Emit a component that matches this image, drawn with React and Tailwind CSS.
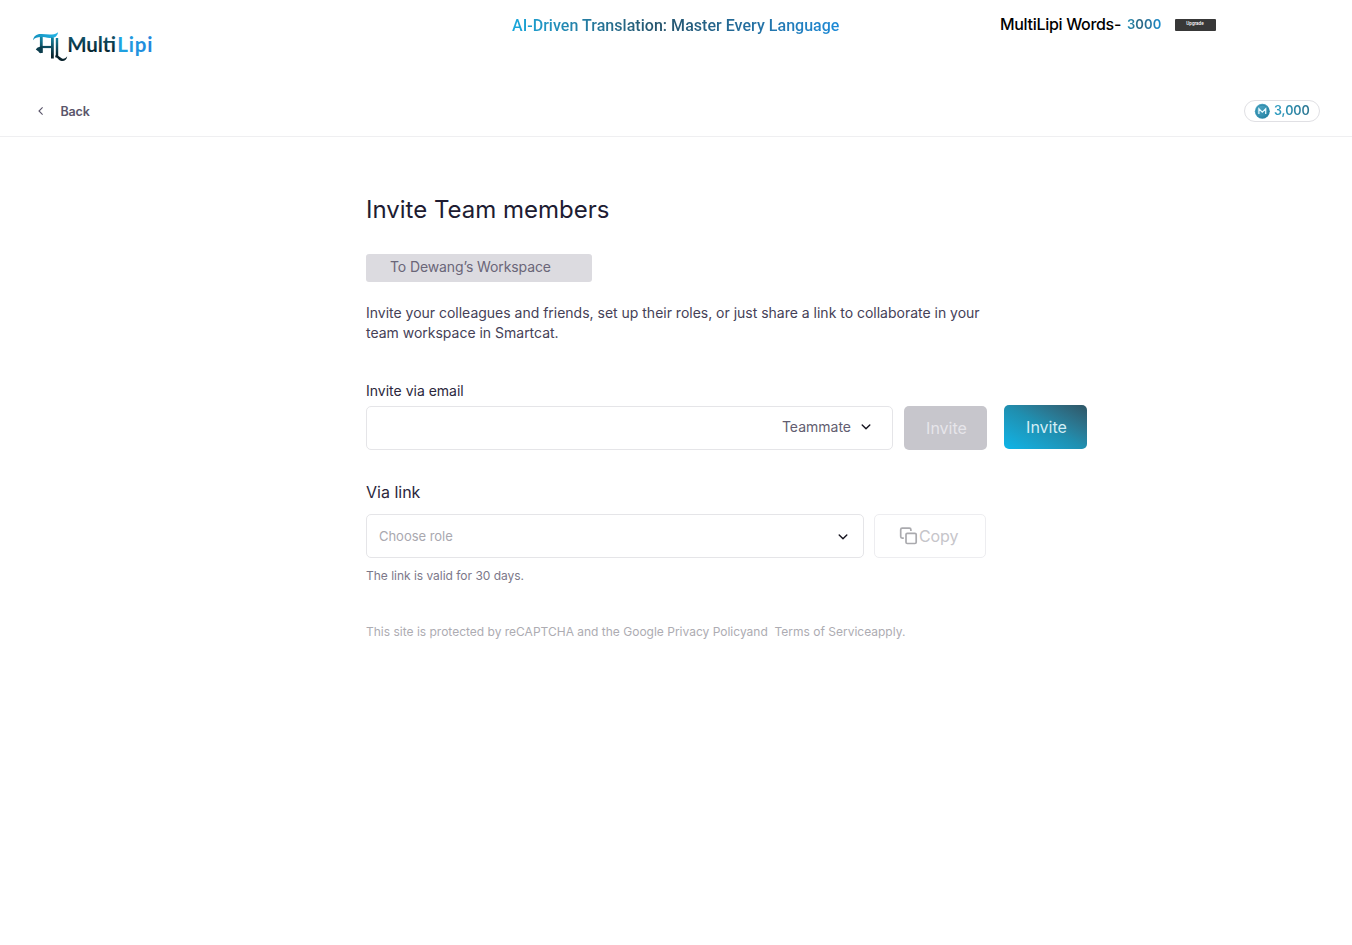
import React from "react";

const Chevron = () => (
  <svg width="10" height="6" viewBox="0 0 10 6" fill="none" stroke="#16141f" strokeWidth="1.4" strokeLinecap="round" strokeLinejoin="round">
    <path d="M1.2 1 L5 4.8 L8.8 1" />
  </svg>
);

const Logo = () => (
  <svg width="126" height="36" viewBox="30 28 126 36" fill="none">
    <defs>
      <linearGradient id="mark" x1="0" y1="32" x2="0" y2="60" gradientUnits="userSpaceOnUse">
        <stop offset="0.15" stopColor="#168cab" />
        <stop offset="0.5" stopColor="#10566b" />
        <stop offset="0.85" stopColor="#08232d" />
      </linearGradient>
      <linearGradient id="bar" x1="33" y1="0" x2="59" y2="0" gradientUnits="userSpaceOnUse">
        <stop stopColor="#1391bd" />
        <stop offset="1" stopColor="#24b5e8" />
      </linearGradient>
      <linearGradient id="word" x1="0" y1="38" x2="0" y2="53" gradientUnits="userSpaceOnUse">
        <stop stopColor="#115066" />
        <stop offset="1" stopColor="#06212b" />
      </linearGradient>
      <linearGradient id="lipi" x1="118" y1="0" x2="153" y2="0" gradientUnits="userSpaceOnUse">
        <stop stopColor="#1fa5e1" />
        <stop offset="1" stopColor="#2384dc" />
      </linearGradient>
    </defs>
    <path d="M33.2 40.2 C33.3 36 37 33.6 41.5 34 C47 34.4 53.5 35.8 58 32.2 C57.6 36.6 54 38.4 49.5 38 C44 37.5 36.5 35.4 33.2 40.2Z" fill="url(#bar)" />
    <path d="M41.3 37 V53 M52.4 37.5 V58.6" stroke="url(#mark)" strokeWidth="2.8" />
    <path d="M57 38 V57" stroke="url(#mark)" strokeWidth="2.4" />
    <path d="M41 47 H52" stroke="#0d4c60" strokeWidth="2.2" />
    <path d="M35.8 49.4 C37.5 46.8 40.5 46.8 42.4 46.3 V51.8 C41.4 54 39.4 53.4 38.5 51.6 Z" fill="#0c3d4d" />
    <path d="M55.6 55.3 C58 55 60 57.4 62 58.4 C63.8 59.2 65.8 58.4 67.2 56.2 C67 59.6 64 61.6 60.9 60.8 C58.4 60.1 57.8 57.3 55.2 57.2Z" fill="#08212b" />
    <text x="67.2" y="52" fontFamily="Lato, sans-serif" fontSize="20.5" fontWeight="700" textLength="48.8" lengthAdjust="spacing" fill="url(#word)">Multi</text>
    <text x="117.2" y="52" fontFamily="Lato, sans-serif" fontSize="20.5" fontWeight="700" textLength="35.2" lengthAdjust="spacing" fill="url(#lipi)">Lipi</text>
  </svg>
);

const Coin = () => (
  <svg width="16" height="16" viewBox="0 0 16 16" fill="none">
    <defs>
      <linearGradient id="coin" x1="2" y1="2" x2="14" y2="14" gradientUnits="userSpaceOnUse">
        <stop stopColor="#55abc8" />
        <stop offset="1" stopColor="#2684a5" />
      </linearGradient>
    </defs>
    <circle cx="8.3" cy="8.3" r="7.5" fill="url(#coin)" />
    <circle cx="8.3" cy="8.3" r="6.1" stroke="#237fa0" strokeWidth=".6" />
    <path d="M4.9 11.1 V5.8 L8.3 9.2 L11.7 5.8 V11.1" stroke="#eafaff" strokeWidth="1.2" />
  </svg>
);

export default function App() {
  return (
    <div className="h-[945px] w-[1352px] overflow-hidden bg-white font-['Inter',sans-serif] whitespace-nowrap">
      <header className="flex h-[88px] items-start">
        <div className="w-[512px] pt-7 pl-[30px]">
          <Logo />
        </div>
        <div className="w-[488px] pt-[13px]">
          <span className="inline-block bg-linear-to-r from-[#18a8dc] via-[#24536b] via-45% to-[#1d8bd8] bg-clip-text font-['Roboto',sans-serif] text-base leading-6 font-medium tracking-[0.035px] text-transparent">
            AI-Driven Translation: Master Every Language
          </span>
        </div>
        <div className="flex items-center pt-[11px]">
          <span className="w-[127px] pb-px text-base leading-[25px] font-medium tracking-[-0.31px] text-black">MultiLipi Words-</span>
          <span className="w-12 pb-[3px]">
            <span className="inline-block bg-linear-to-r from-[#1d8eb5] via-[#2a6480] via-40% to-[#168ed0] bg-clip-text text-[13px] leading-[22px] font-semibold tracking-[0.1px] text-transparent">
              3000
            </span>
          </span>
          <button className="flex h-3 w-[41px] items-center justify-center rounded-[1px] bg-[#383838] pr-px font-['Roboto',sans-serif] text-[4.6px] font-medium text-white">
            Upgrade
          </button>
        </div>
      </header>

      <nav className="flex h-[49px] items-center justify-between border-b border-[#efeff1] pr-8 pl-[37px]">
        <button className="flex items-center pb-[2px] text-[12.5px] leading-5 font-semibold tracking-[-0.15px] text-[#5b566b]">
          <svg className="mr-[15.5px]" width="8" height="8" viewBox="0 0 8 8" fill="none" stroke="#5b566b" strokeWidth="1.1">
            <path d="M5.6 .4 L2 4 L5.6 7.6" />
          </svg>
          <span className="pt-px">Back</span>
        </button>
        <div className="mb-[2px] flex h-[22px] w-[76px] items-center gap-1 rounded-full border border-[#e0e0e4] pl-[9px]">
          <Coin />
          <span className="bg-linear-to-r from-[#2a9dc3] to-[#2c7590] bg-clip-text text-[12.5px] font-semibold tracking-[-0.08px] text-transparent">3,000</span>
        </div>
      </nav>

      <main className="flex flex-col items-start pt-[56px] pl-[366px]">
        <h1 className="text-2xl leading-[34px] text-[#201c32]">Invite Team members</h1>
        <div className="mt-[27px] h-7 w-[226px] rounded-[3px] bg-[#dcdbe0] pl-6 text-sm leading-[26px] tracking-[-0.11px] text-[#6a6678]">
          To Dewang’s Workspace
        </div>
        <p className="mt-[21px] text-sm leading-5 tracking-[-0.01px] text-[#454157]">
          Invite your colleagues and friends, set up their roles, or just share a link to collaborate in your
          <br />
          team workspace in Smartcat.
        </p>

        <label className="mt-[38px] text-sm leading-5 text-[#2b273c]">Invite via email</label>
        <div className="mt-1 flex h-[45px] items-start">
          <div className="mt-px flex h-11 w-[527px] items-center justify-end rounded-[5px] border border-[#e5e5e8] pr-[21px] pb-[2px]">
            <span className="mr-[10px] text-sm text-[#625d70]">Teammate</span>
            <Chevron />
          </div>
          <button className="mt-px ml-[11px] h-11 w-[83px] rounded-[5px] bg-[#c7c6cc] pl-[2px] text-base font-normal text-[#e6e5ea]">Invite</button>
          <button className="ml-[17px] h-11 w-[83px] rounded-[5px] bg-linear-to-tr from-[#0bb5e8] via-[#1f8fb0] to-[#2f5666] pl-[2px] text-base font-normal text-[#d3edf5]">
            Invite
          </button>
        </div>

        <label className="mt-[30px] text-base leading-6 text-[#2b273c]">Via link</label>
        <div className="mt-[10px] flex gap-[10px]">
          <div className="flex h-11 w-[498px] items-center justify-between rounded-[5px] border border-[#e5e5e8] pr-[15px] pl-3">
            <span className="pt-[2px] text-[13px] tracking-[-0.03px] text-[#a9a8af]">Choose role</span>
            <span className="pt-px">
              <Chevron />
            </span>
          </div>
          <button className="flex h-11 w-28 items-center rounded-[5px] border border-[#ededf0] pl-6 text-base font-normal tracking-[-0.1px] text-[#c6c5ca]">
            <svg width="20" height="20" viewBox="0 0 20 20" fill="none" stroke="#aaaaae" strokeWidth="1.7" strokeLinejoin="round">
              <path d="M4.8 12.1 H3.2 Q1.7 12.1 1.7 10.6 V3.7 Q1.7 2.2 3.2 2.2 H10.4 Q11.9 2.2 11.9 3.7 V5" />
              <rect x="7" y="7.3" width="10.2" height="10.2" rx="1.3" />
            </svg>
            Copy
          </button>
        </div>
        <p className="mt-[9px] text-xs leading-[18px] tracking-[-0.02px] text-[#7c7889]">The link is valid for 30 days.</p>
        <p className="mt-[38px] text-xs leading-[18px] text-[#adacb2]">
          This site is protected by reCAPTCHA and the Google <a>Privacy Policy</a>and&nbsp; <a>Terms of Service</a>apply.
        </p>
      </main>
    </div>
  );
}
